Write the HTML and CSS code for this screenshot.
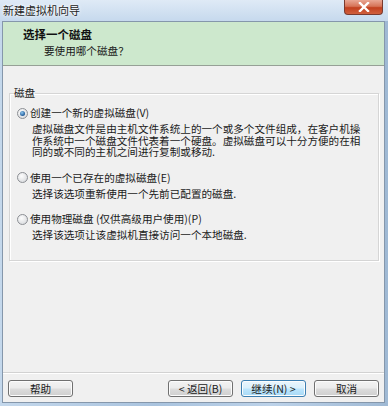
FILE: index.html
```html
<!DOCTYPE html>
<html>
    <head>
        <title>新建虚拟机向导</title>
        <meta charset="UTF-8">
        <link rel="stylesheet" href="styles.css">
    </head>
    <body>
        <div class="window">
            <div class="titlebar">
                <span class="title">新建虚拟机向导</span>
                <div class="close">
                    <svg width="12" height="10" viewBox="0 0 12 10">
                        <path d="M2 1 L10 9 M10 1 L2 9" stroke="#fff" stroke-width="2.4" stroke-linecap="square"/>
                    </svg>
                </div>
            </div>
            <div class="client">
                <div class="header">
                    <div class="header_title">选择一个磁盘</div>
                    <div class="header_sub">要使用哪个磁盘？</div>
                </div>
                <div class="body">
                    <fieldset class="group">
                        <legend>磁盘</legend>
                        <div class="option">
                            <div class="option_label"><span class="radio checked"></span>创建一个新的虚拟磁盘(V)</div>
                            <p>虚拟磁盘文件是由主机文件系统上的一个或多个文件组成，在客户机操作系统中一个磁盘文件代表着一个硬盘。虚拟磁盘可以十分方便的在相同的或不同的主机之间进行复制或移动.</p>
                        </div>
                        <div class="option">
                            <div class="option_label"><span class="radio"></span>使用一个已存在的虚拟磁盘(E)</div>
                            <p>选择该选项重新使用一个先前已配置的磁盘.</p>
                        </div>
                        <div class="option">
                            <div class="option_label"><span class="radio"></span>使用物理磁盘 (仅供高级用户使用)(P)</div>
                            <p>选择该选项让该虚拟机直接访问一个本地磁盘.</p>
                        </div>
                    </fieldset>
                </div>
                <div class="footer">
                    <button class="btn btn_help">帮助</button>
                    <div class="spacer"></div>
                    <button class="btn">&lt; 返回(B)</button>
                    <button class="btn btn_default">继续(N) &gt;</button>
                    <button class="btn">取消</button>
                </div>
            </div>
        </div>
    </body>
</html>
```

FILE: styles.css
```css
html, body {
    margin: 0;
    padding: 0;
}
body {
    font-family: "Noto Sans CJK SC", "Noto Sans", sans-serif;
    font-size: 10.6px;
    color: #1a1a1a;
}
.window {
    width: 388px;
    height: 406px;
    display: flex;
    flex-direction: column;
    background: linear-gradient(90deg, #c4d8ec, #a9c3de 40%, #bcd2e9 70%, #9fb9d4);
    box-sizing: border-box;
}
.titlebar {
    height: 21px;
    display: flex;
    align-items: flex-start;
    justify-content: space-between;
    background: linear-gradient(180deg, #dfeaf6, #c6d9ed);
}
.title {
    margin: 3px 0 0 3px;
    font-size: 11px;
    line-height: 14px;
    color: #222;
    text-shadow: 0 0 4px #fff, 0 0 2px #fff;
}
.close {
    width: 39px;
    height: 15px;
    margin-right: 5px;
    border: 1px solid #7a3a2e;
    border-top: none;
    border-radius: 0 0 4px 4px;
    background: linear-gradient(180deg, #e9a794 0%, #d67458 45%, #c2401f 55%, #d0603d 100%);
    display: flex;
    align-items: center;
    justify-content: center;
    box-sizing: border-box;
}
.client {
    flex: 1;
    margin: 0 3px 3px 2px;
    border: 1px solid #8597ab;
    background: #f0f0f0;
    display: flex;
    flex-direction: column;
}
.header {
    height: 44px;
    background: #cde8cd;
    border-bottom: 1px solid #96a096;
    padding: 5px 0 0 20px;
    box-sizing: border-box;
}
.header_title {
    font-weight: bold;
    font-size: 11.5px;
    line-height: 14px;
    color: #111;
}
.header_sub {
    margin: 3px 0 0 21px;
    line-height: 14px;
}
.body {
    flex: 1;
    padding: 20px 5px 0 6px;
}
.group {
    margin: 0;
    padding: 6px 8px 19px 7px;
    border: 1px solid #d5d5d5;
    box-shadow: inset 1px 1px 0 #fff, 1px 1px 0 #fff;
}
.group legend {
    padding: 0;
    margin-left: -3px;
    line-height: 14px;
}
.option {
    margin-bottom: 13px;
}
.option:last-child {
    margin-bottom: 0;
}
.option_label {
    display: flex;
    align-items: center;
    line-height: 14px;
}
.option p {
    margin: 3px 0 0 15px;
    line-height: 11.5px;
}
.radio {
    width: 11px;
    height: 11px;
    margin-right: 2px;
    border: 1px solid #8c8f94;
    border-radius: 50%;
    background: radial-gradient(circle at 40% 35%, #fdfdfd, #dadcdf 80%);
    box-sizing: border-box;
    display: flex;
    align-items: center;
    justify-content: center;
}
.radio.checked::after {
    content: "";
    width: 5px;
    height: 5px;
    border-radius: 50%;
    background: radial-gradient(circle at 40% 35%, #8fc7f0, #1f5b98 70%);
}
.footer {
    height: 30px;
    border-top: 1px solid #d2d2d2;
    box-shadow: inset 0 1px 0 #fff;
    display: flex;
    align-items: flex-start;
    padding: 7px 5px 0 5px;
    box-sizing: border-box;
    gap: 8px;
}
.spacer {
    flex: 1;
}
.btn {
    width: 65px;
    height: 17px;
    padding: 0;
    font-family: inherit;
    font-size: 10.6px;
    color: #1a1a1a;
    border: 1px solid #707070;
    border-radius: 3px;
    background: linear-gradient(180deg, #f3f3f3 0%, #ebebeb 49%, #dddddd 51%, #cfcfcf 100%);
    box-shadow: inset 0 0 0 1px #fcfcfc;
}
.btn_default {
    border-color: #3c7fb1;
    background: linear-gradient(180deg, #eaf6fd 0%, #d9f0fc 49%, #bee6fd 51%, #a7d9f5 100%);
}
```
